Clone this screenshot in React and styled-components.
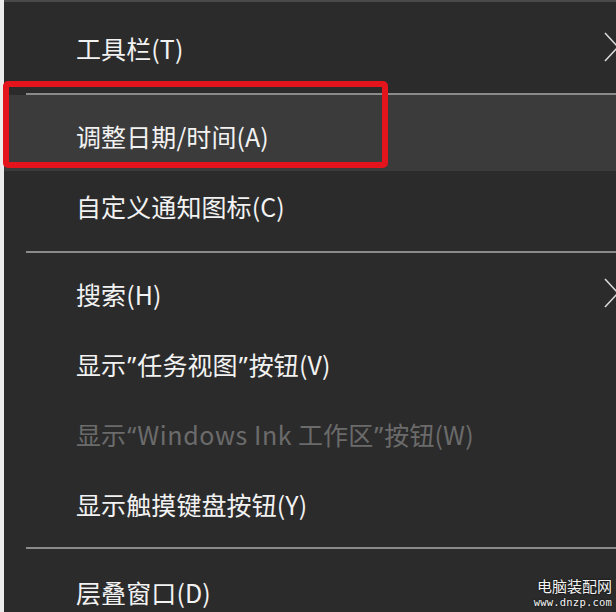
import React from "react";
import styled, { createGlobalStyle } from "styled-components";

const Global = createGlobalStyle`
  html, body { margin: 0; padding: 0; background: #ececec; }
  body { font-family: "Noto Sans CJK SC", "Noto Sans", sans-serif; }
`;

const Page = styled.div`
  position: relative;
  width: 616px;
  height: 612px;
  overflow: hidden;
  background: #ececec;
  display: flex;
`;

const Menu = styled.div`
  flex: 1;
  margin-left: 4px;
  background: #2b2b2b;
  border-top: 2px solid #4a4a4a;
  padding-top: 11px;
  display: flex;
  flex-direction: column;
  overflow: hidden;
`;

const Row = styled.div`
  height: ${(p) => 70 + (p.$padTop || 0)}px;
  padding-top: ${(p) => p.$padTop || 0}px;
  box-sizing: border-box;
  flex-shrink: 0;
  display: flex;
  align-items: center;
  padding-left: 72px;
  background: ${(p) => (p.$hover ? "#3b3b3b" : "transparent")};
  color: ${(p) => (p.$disabled ? "#6b6b6b" : "#f2f2f2")};
  font-size: 25px;
  letter-spacing: 0.1px;
  white-space: nowrap;
`;

const Label = styled.span`
  flex: 1;
`;

const Quote = styled.span`
  font-family: "Noto Sans", sans-serif;
  margin: 0 1px;
`;

const Latin = styled.span`
  letter-spacing: 0.6px;
`;

const Separator = styled.div`
  flex-shrink: 0;
  height: 2px;
  margin: ${(p) => p.$top}px 0 ${(p) => p.$bottom}px 22px;
  background: #8a8a8a;
`;

const Chevron = styled.svg`
  width: 12px;
  height: 30px;
  flex-shrink: 0;
  margin-top: -2px;
`;

const Highlight = styled.div`
  position: absolute;
  left: 3px;
  top: 81px;
  width: 385px;
  height: 87px;
  box-sizing: border-box;
  border: 6px solid #e3141b;
  border-radius: 5px;
  pointer-events: none;
`;

const Watermark = styled.div`
  position: absolute;
  right: 4px;
  bottom: 3px;
  display: flex;
  flex-direction: column;
  align-items: flex-end;
  color: #f4f4f4;
  text-shadow: 0 0 2px #000;
`;

const MarkTitle = styled.div`
  font-family: "Noto Sans CJK SC", sans-serif;
  font-size: 15px;
  line-height: 18px;
`;

const MarkUrl = styled.div`
  font-family: "DejaVu Sans Mono", monospace;
  font-size: 10.5px;
  line-height: 14px;
  letter-spacing: 0.2px;
`;

const Arrow = () => (
  <Chevron viewBox="0 0 12 30">
    <polyline points="1,1 14,15 1,29" fill="none" stroke="#d8d8d8" strokeWidth="1.6" />
  </Chevron>
);

export default function App() {
  return (
    <>
      <Global />
      <Page>
        <Menu>
          <Row>
            <Label>工具栏(T)</Label>
            <Arrow />
          </Row>
          <Separator $top={10} $bottom={0} />
          <Row $hover $padTop={6}>
            <Label>调整日期/时间(A)</Label>
          </Row>
          <Row>
            <Label>自定义通知图标(C)</Label>
          </Row>
          <Separator $top={10} $bottom={6} />
          <Row>
            <Label>搜索(H)</Label>
            <Arrow />
          </Row>
          <Row>
            <Label>
              显示<Quote>”</Quote>任务视图<Quote>”</Quote>按钮(V)
            </Label>
          </Row>
          <Row $disabled>
            <Label>
              显示<Quote>“</Quote><Latin>Windows Ink</Latin> 工作区<Quote>”</Quote>按钮(W)
            </Label>
          </Row>
          <Row>
            <Label>显示触摸键盘按钮(Y)</Label>
          </Row>
          <Separator $top={8} $bottom={8} />
          <Row>
            <Label>层叠窗口(D)</Label>
          </Row>
        </Menu>
        <Highlight />
        <Watermark>
          <MarkTitle>电脑装配网</MarkTitle>
          <MarkUrl>www.dnzp.com</MarkUrl>
        </Watermark>
      </Page>
    </>
  );
}
